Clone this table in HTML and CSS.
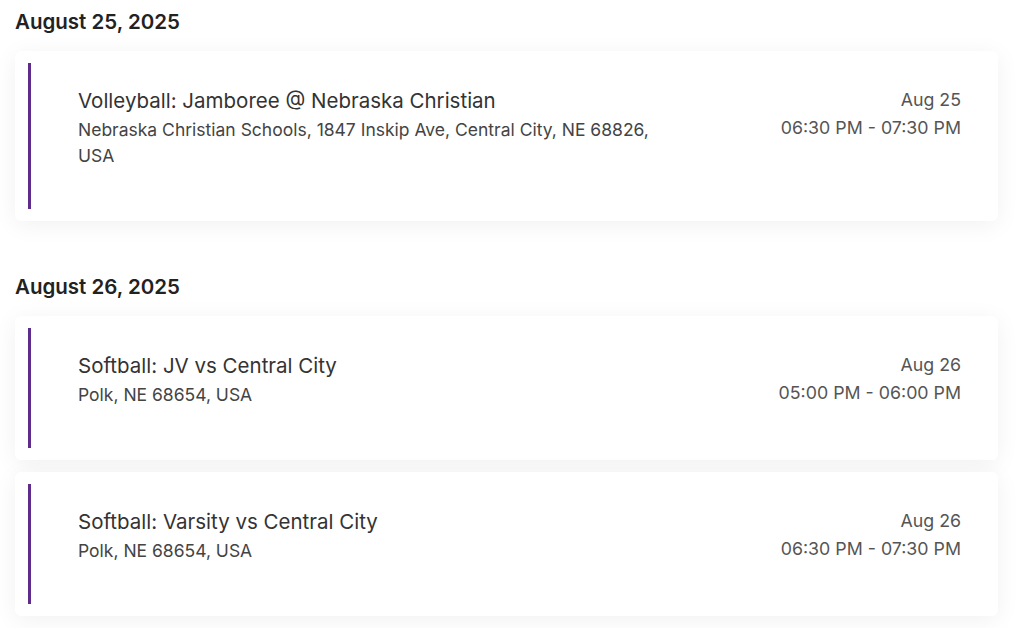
FILE: index.html
```
<!DOCTYPE html>
<html lang="en">
<head>
    <meta charset="UTF-8">
    <meta name="viewport" content="width=device-width, initial-scale=1.0">
    <title>Events</title>
    <link rel="stylesheet" href="styles.css">
</head>
<body>
    <div class="container">
        <section class="day">
            <h2>August 25, 2025</h2>
            <div class="event">
                <div class="event-body">
                    <div class="event-info">
                        <div class="event-title">Volleyball: Jamboree @ Nebraska Christian</div>
                        <div class="event-place">Nebraska Christian Schools, 1847 Inskip Ave, Central City, NE 68826, USA</div>
                    </div>
                    <div class="event-when">
                        <div>Aug 25</div>
                        <div>06:30 PM - 07:30 PM</div>
                    </div>
                </div>
            </div>
        </section>

        <section class="day">
            <h2>August 26, 2025</h2>
            <div class="event">
                <div class="event-body">
                    <div class="event-info">
                        <div class="event-title">Softball: JV vs Central City</div>
                        <div class="event-place">Polk, NE 68654, USA</div>
                    </div>
                    <div class="event-when">
                        <div>Aug 26</div>
                        <div>05:00 PM - 06:00 PM</div>
                    </div>
                </div>
            </div>
            <div class="event">
                <div class="event-body">
                    <div class="event-info">
                        <div class="event-title">Softball: Varsity vs Central City</div>
                        <div class="event-place">Polk, NE 68654, USA</div>
                    </div>
                    <div class="event-when">
                        <div>Aug 26</div>
                        <div>06:30 PM - 07:30 PM</div>
                    </div>
                </div>
            </div>
        </section>
    </div>
</body>
</html>
```

FILE: styles.css
```
body {
    font-family: Inter, "Liberation Sans", Arial, sans-serif;
    margin: 0;
    background-color: #ffffff;
    color: #333;
}
.container {
    padding: 8px 26px 0 15px;
}
.day {
    margin-bottom: 52px;
}
.day:last-child {
    margin-bottom: 0;
}
h2 {
    font-size: 20.5px;
    line-height: 28px;
    font-weight: 600;
    color: #222;
    margin: 0 0 15px 0;
}
.event {
    background: white;
    border-radius: 6px;
    box-shadow: 0 4px 24px rgba(0,0,0,0.06);
    padding: 12px 13px;
    margin-bottom: 12px;
}
.event-body {
    display: flex;
    justify-content: space-between;
    border-left: 3px solid #5e2d8c;
    padding: 24px 24px 40px 47px;
}
.event-info {
    max-width: 600px;
}
.event-title {
    font-size: 20.5px;
    line-height: 28px;
    color: #333;
}
.event-place {
    font-size: 17.5px;
    line-height: 26px;
    margin-top: 2px;
    color: #444;
}
.event-when {
    text-align: right;
    font-size: 17.8px;
    line-height: 28px;
    color: #555;
    margin-top: -1px;
}
```
